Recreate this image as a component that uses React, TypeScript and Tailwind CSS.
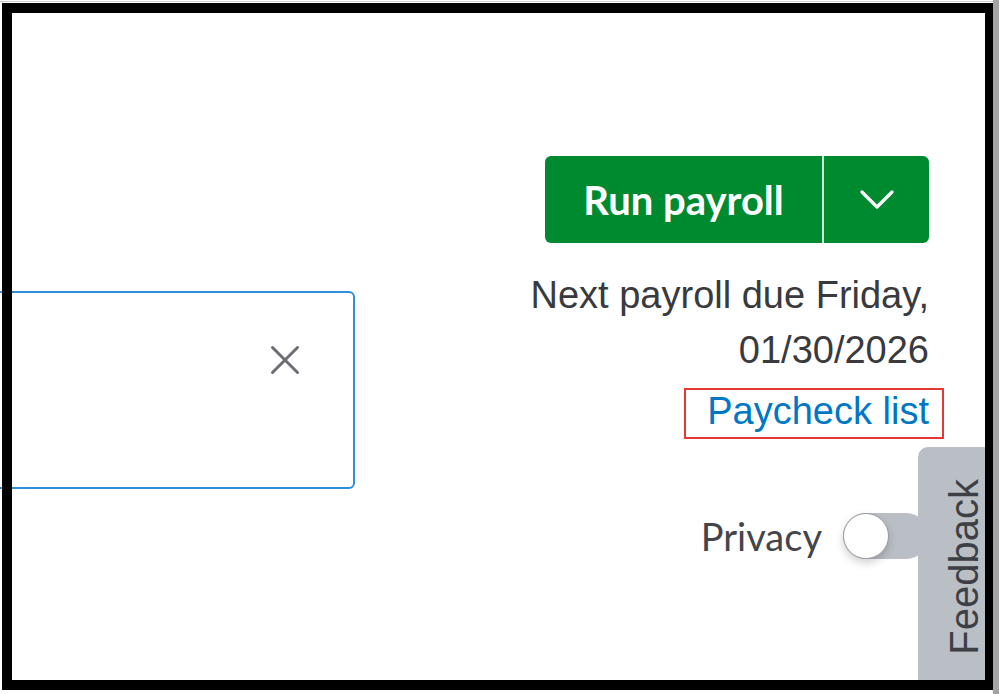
export default function App() {
  return (
    <div className="relative w-[999px] h-[694px] overflow-hidden bg-white font-['Liberation_Sans',Arial,sans-serif] text-[#393a3d]">
      <div className="flex items-start pt-[156px]">
        {/* Input with clear button */}
        <div className="ml-[-30px] mt-[135px] flex h-[198px] w-[385px] justify-end rounded-[6px] border-2 border-[#2f8fd8] pr-[53px] pt-[52px]">
          <svg width="30" height="30" viewBox="0 0 30 30" fill="none">
            <path d="M2.5 2.5 L27.5 27.5 M27.5 2.5 L2.5 27.5" stroke="#6b6c72" strokeWidth="3" strokeLinecap="round" />
          </svg>
        </div>

        {/* Payroll actions */}
        <div className="ml-auto mr-[70px] flex flex-col items-end">
          <div className="flex h-[87px] overflow-hidden rounded-[6px] bg-[#008a30]">
            <button className="flex w-[277px] items-center justify-center font-['Lato',sans-serif] text-[40px] font-bold text-white">
              Run payroll
            </button>
            <div className="w-[2px] bg-white/80" />
            <button className="flex w-[105px] items-center justify-center">
              <svg width="34" height="20" viewBox="0 0 34 20" fill="none">
                <path d="M2 2 L17 17 L32 2" stroke="white" strokeWidth="3.2" strokeLinecap="round" strokeLinejoin="round" />
              </svg>
            </button>
          </div>

          <p className="mt-[25px] text-right text-[38px] leading-[55px]">
            Next payroll due Friday,
            <br />
            01/30/2026
          </p>

          <a className="mr-[-15px] mt-[10px] h-[51px] w-[260px] border-2 border-[#e53935] pr-[13px] text-right text-[38px] leading-[42px] text-[#0077c5]">
            Paycheck list
          </a>

          <div className="mt-[74px] flex items-center gap-[21px]">
            <span className="font-['Lato',sans-serif] text-[38px] leading-[46px] text-[#44454a]">Privacy</span>
            <div className="relative h-[46px] w-[86px] rounded-full bg-[#babec5]">
              <div className="absolute left-0 top-0 h-[46px] w-[46px] rounded-full border border-[#9a9ca2] bg-white shadow-[0_4px_8px_rgba(0,0,0,0.18)]" />
            </div>
          </div>
        </div>
      </div>

      {/* Feedback tab */}
      <div className="absolute left-[918px] top-[447px] flex h-[233px] w-[81px] items-end rounded-tl-[10px] bg-[#babec5] pb-[25px] pl-[24px]">
        <span className="rotate-180 text-[40px] leading-[44px] text-[#3e3f44] [writing-mode:vertical-rl]">Feedback</span>
      </div>

      {/* Screenshot frame */}
      <div className="pointer-events-none absolute left-0 top-[1px] h-px w-[993px] bg-[#c8c8c8]" />
      <div className="pointer-events-none absolute right-0 top-0 h-full w-[6px] bg-[#a3a3a3]" />
      <div className="pointer-events-none absolute left-[2px] top-[3px] h-[687px] w-[991px] border-b-[10px] border-l-[10px] border-r-[8px] border-t-[10px] border-black" />
    </div>
  );
}
